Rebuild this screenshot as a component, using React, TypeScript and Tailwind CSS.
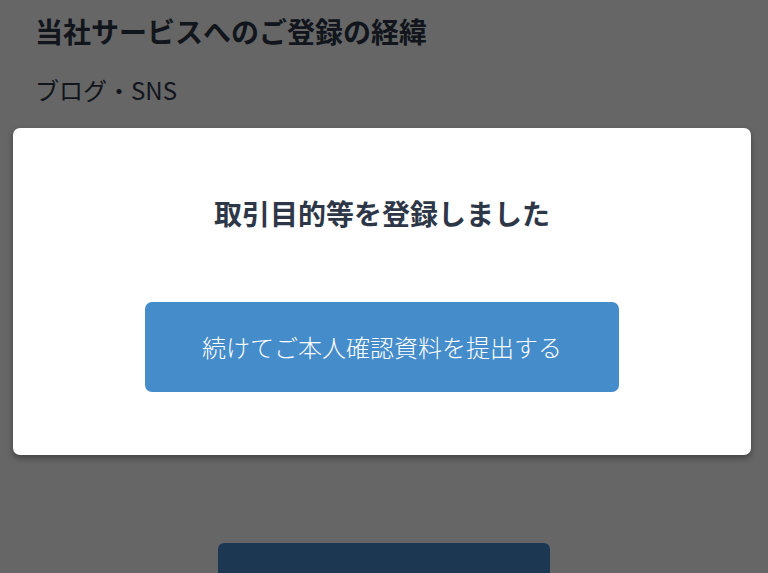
import React from "react";

export default function App() {
  const font = { fontFamily: '"Noto Sans CJK JP", "Noto Sans", sans-serif' };
  return (
    <div className="relative w-[768px] h-[573px] overflow-hidden bg-white" style={font}>
      <div className="pl-[35px] pr-[37px] pt-[11px]">
        <h2 className="text-[28px] leading-[40px] font-bold text-[#2d3748]">当社サービスへのご登録の経緯</h2>
        <p className="mt-[21px] text-[24px] leading-[36px] text-[#2d3748]">ブログ・SNS</p>
        <div className="mt-[435px] flex justify-center">
          <div className="ml-[2px] w-[332px] h-[80px] rounded-[6px] bg-[#448aca]" />
        </div>
      </div>
      <div className="absolute inset-0 bg-black/60">
        <div className="ml-[13px] mt-[128px] w-[738px] h-[327px] rounded-[7px] bg-white shadow-[0_3px_6px_rgba(0,0,0,0.35)] flex flex-col items-center">
          <div className="pt-[65px] text-[28px] leading-[40px] font-bold text-[#2d3748]">取引目的等を登録しました</div>
          <button className="mt-[69px] w-[474px] h-[90px] rounded-[7px] bg-[#458ccb] text-white text-[24px] leading-[36px] font-light flex items-center justify-center">
            続けてご本人確認資料を提出する
          </button>
        </div>
      </div>
    </div>
  );
}
